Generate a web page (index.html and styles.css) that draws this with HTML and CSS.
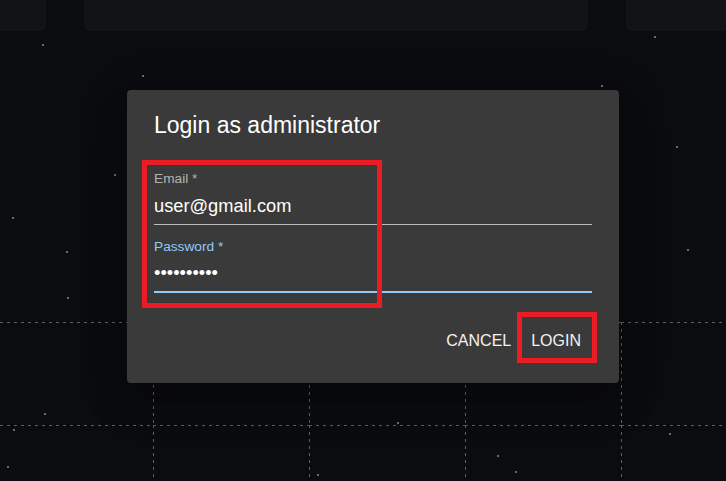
FILE: index.html
```html
<!DOCTYPE html>
<html lang="en">
<head>
<meta charset="utf-8">
<title>Login as administrator</title>
<link rel="stylesheet" href="styles.css">
</head>
<body>
<div class="page">
  <div class="topbar">
    <div class="card card-left"></div>
    <div class="card card-mid"></div>
    <div class="card card-right"></div>
  </div>
  <div class="grid">
    <div class="cell first"></div>
    <div class="cell"></div>
    <div class="cell"></div>
    <div class="cell"></div>
    <div class="cell"></div>
    <div class="cell first"></div>
    <div class="cell"></div>
    <div class="cell"></div>
    <div class="cell"></div>
    <div class="cell"></div>
  </div>

  <span class="star" style="left:42px;top:44px"></span>
  <span class="star" style="left:654px;top:36px"></span>
  <span class="star" style="left:142px;top:75px"></span>
  <span class="star" style="left:601px;top:85px"></span>
  <span class="star" style="left:114px;top:174px"></span>
  <span class="star" style="left:12px;top:217px"></span>
  <span class="star" style="left:66px;top:251px"></span>
  <span class="star" style="left:67px;top:297px"></span>
  <span class="star" style="left:676px;top:146px"></span>
  <span class="star" style="left:687px;top:249px"></span>
  <span class="star" style="left:44px;top:413px"></span>
  <span class="star" style="left:13px;top:429px"></span>
  <span class="star" style="left:397px;top:422px"></span>
  <span class="star" style="left:7px;top:466px"></span>
  <span class="star" style="left:497px;top:455px"></span>
  <span class="star" style="left:317px;top:474px"></span>
  <span class="star" style="left:515px;top:471px"></span>
  <span class="star" style="left:669px;top:433px"></span>

  <div class="dialog">
    <h2 class="title">Login as administrator</h2>
    <div class="field">
      <label class="label">Email *</label>
      <div class="value">user@gmail.com</div>
    </div>
    <div class="field field-focused">
      <label class="label label-focused">Password *</label>
      <div class="value value-focused">••••••••••</div>
    </div>
    <div class="actions">
      <button class="btn">CANCEL</button>
      <button class="btn">LOGIN</button>
    </div>
    <div class="mark mark-fields"></div>
    <div class="mark mark-login"></div>
  </div>
</div>
</body>
</html>
```

FILE: styles.css
```css
html, body {
  margin: 0;
  padding: 0;
}
body {
  background: #0b0c0f;
  font-family: "Liberation Sans", Arial, sans-serif;
  width: 726px;
  height: 481px;
  overflow: hidden;
}
.page {
  position: relative;
  width: 726px;
  height: 481px;
  overflow: hidden;
  background: #0b0c0f;
}
.topbar {
  display: flex;
  gap: 38px;
  margin-left: -20px;
  height: 31px;
}
.card {
  height: 31px;
  background: #121315;
  border-radius: 0 0 5px 5px;
  flex: none;
}
.card-left { width: 66px; }
.card-mid { width: 504px; }
.card-right { width: 200px; }

.grid {
  margin-top: 291px;
  display: grid;
  grid-template-columns: 153px 156px 156px 156px 1fr;
  grid-template-rows: 103px 1fr;
  height: 159px;
}
.cell {
  background-image:
    repeating-linear-gradient(to right, #606060 0 3px, transparent 3px 7px),
    repeating-linear-gradient(to bottom, #606060 0 3px, transparent 3px 7px);
  background-size: 100% 1px, 1px 100%;
  background-position: left top, left top;
  background-repeat: no-repeat;
}
.cell.first {
  background-image:
    repeating-linear-gradient(to right, #606060 0 3px, transparent 3px 7px);
  background-size: 100% 1px;
}

.star {
  position: absolute;
  width: 2px;
  height: 2px;
  background: #8d8d8f;
  border-radius: 1px;
}

.dialog {
  position: absolute;
  left: 127px;
  top: 90px;
  width: 492px;
  height: 293px;
  box-sizing: border-box;
  padding: 21px 27px 0 27px;
  background: #3a3a3a;
  border-radius: 4px;
  box-shadow: 0 11px 15px -7px rgba(0,0,0,0.2), 0 24px 38px 3px rgba(0,0,0,0.14), 0 9px 46px 8px rgba(0,0,0,0.12);
  display: flex;
  flex-direction: column;
}
.title {
  margin: 0;
  font-size: 23px;
  font-weight: normal;
  line-height: 28px;
  color: #ffffff;
}
.field {
  display: flex;
  flex-direction: column;
  margin-top: 32px;
}
.field-focused {
  margin-top: 14px;
}
.label {
  font-size: 13.7px;
  line-height: 16px;
  color: #b3b3b3;
}
.label-focused {
  color: #90caf9;
}
.value {
  margin-top: 8px;
  font-size: 18.3px;
  line-height: 22px;
  color: #ffffff;
  padding-bottom: 7px;
  border-bottom: 1px solid #bdbdbd;
}
.value-focused {
  margin-top: 7px;
  border-bottom: 2px solid #90caf9;
}
.actions {
  display: flex;
  justify-content: flex-end;
  gap: 4px;
  margin-top: 32px;
  margin-right: 3px;
}
.btn {
  background: none;
  border: none;
  padding: 6px 8px;
  font-family: "Liberation Sans", Arial, sans-serif;
  font-size: 16px;
  line-height: 20px;
  color: #f2f2f2;
  cursor: pointer;
}
.mark {
  position: absolute;
  box-sizing: border-box;
  border: 5px solid #ed1c24;
}
.mark-fields {
  left: 15px;
  top: 70px;
  width: 240px;
  height: 148px;
}
.mark-login {
  left: 390px;
  top: 222px;
  width: 80px;
  height: 51px;
}
```
